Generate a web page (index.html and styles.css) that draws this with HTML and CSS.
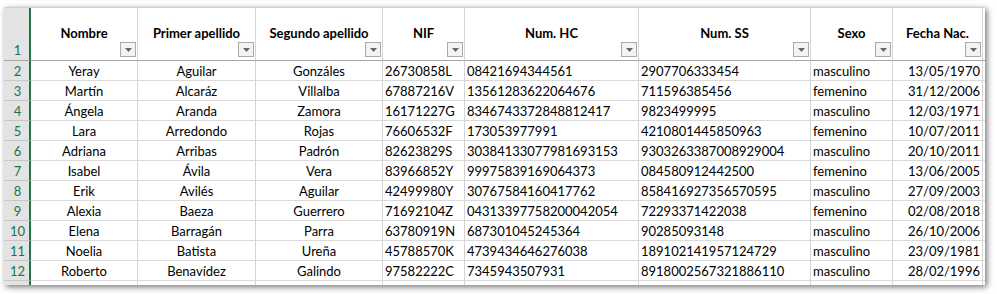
FILE: index.html
```html
<!DOCTYPE html>
<html lang="es">
  <head>
    <meta charset="UTF-8" />
    <title>Pacientes</title>
    <link rel="stylesheet" href="styles.css">
  </head>
  <body>
    <div class="sheet">
      <div class="grid">
        <!-- Header row (frozen) -->
        <div class="rh rh-top">1</div>
        <div class="hd">Nombre<span class="filter"><svg width="7" height="4"><polygon points="0,0 7,0 3.5,4" fill="#666"/></svg></span></div>
        <div class="hd">Primer apellido<span class="filter"><svg width="7" height="4"><polygon points="0,0 7,0 3.5,4" fill="#666"/></svg></span></div>
        <div class="hd">Segundo apellido<span class="filter"><svg width="7" height="4"><polygon points="0,0 7,0 3.5,4" fill="#666"/></svg></span></div>
        <div class="hd">NIF<span class="filter"><svg width="7" height="4"><polygon points="0,0 7,0 3.5,4" fill="#666"/></svg></span></div>
        <div class="hd">Num. HC<span class="filter"><svg width="7" height="4"><polygon points="0,0 7,0 3.5,4" fill="#666"/></svg></span></div>
        <div class="hd">Num. SS<span class="filter"><svg width="7" height="4"><polygon points="0,0 7,0 3.5,4" fill="#666"/></svg></span></div>
        <div class="hd">Sexo<span class="filter"><svg width="7" height="4"><polygon points="0,0 7,0 3.5,4" fill="#666"/></svg></span></div>
        <div class="hd">Fecha Nac.<span class="filter"><svg width="7" height="4"><polygon points="0,0 7,0 3.5,4" fill="#666"/></svg></span></div>
        <div class="hd x"></div>

        <div class="rh">2</div>
        <div class="c">Yeray</div><div class="c">Aguilar</div><div class="c">Gonzáles</div>
        <div>26730858L</div><div>08421694344561</div><div>2907706333454</div>
        <div>masculino</div><div class="r">13/05/1970</div><div class="x"></div>

        <div class="rh">3</div>
        <div class="c">Martín</div><div class="c">Alcaráz</div><div class="c">Villalba</div>
        <div>67887216V</div><div>13561283622064676</div><div>711596385456</div>
        <div>femenino</div><div class="r">31/12/2006</div><div class="x"></div>

        <div class="rh">4</div>
        <div class="c">Ángela</div><div class="c">Aranda</div><div class="c">Zamora</div>
        <div>16171227G</div><div>8346743372848812417</div><div>9823499995</div>
        <div>masculino</div><div class="r">12/03/1971</div><div class="x"></div>

        <div class="rh">5</div>
        <div class="c">Lara</div><div class="c">Arredondo</div><div class="c">Rojas</div>
        <div>76606532F</div><div>173053977991</div><div>4210801445850963</div>
        <div>femenino</div><div class="r">10/07/2011</div><div class="x"></div>

        <div class="rh">6</div>
        <div class="c">Adriana</div><div class="c">Arribas</div><div class="c">Padrón</div>
        <div>82623829S</div><div>30384133077981693153</div><div>9303263387008929004</div>
        <div>masculino</div><div class="r">20/10/2011</div><div class="x"></div>

        <div class="rh">7</div>
        <div class="c">Isabel</div><div class="c">Ávila</div><div class="c">Vera</div>
        <div>83966852Y</div><div>99975839169064373</div><div>084580912442500</div>
        <div>femenino</div><div class="r">13/06/2005</div><div class="x"></div>

        <div class="rh">8</div>
        <div class="c">Erik</div><div class="c">Avilés</div><div class="c">Aguilar</div>
        <div>42499980Y</div><div>30767584160417762</div><div>858416927356570595</div>
        <div>masculino</div><div class="r">27/09/2003</div><div class="x"></div>

        <div class="rh">9</div>
        <div class="c">Alexia</div><div class="c">Baeza</div><div class="c">Guerrero</div>
        <div>71692104Z</div><div>04313397758200042054</div><div>72293371422038</div>
        <div>femenino</div><div class="r">02/08/2018</div><div class="x"></div>

        <div class="rh">10</div>
        <div class="c">Elena</div><div class="c">Barragán</div><div class="c">Parra</div>
        <div>63780919N</div><div>687301045245364</div><div>90285093148</div>
        <div>masculino</div><div class="r">26/10/2006</div><div class="x"></div>

        <div class="rh">11</div>
        <div class="c">Noelia</div><div class="c">Batista</div><div class="c">Ureña</div>
        <div>45788570K</div><div>4739434646276038</div><div>189102141957124729</div>
        <div>masculino</div><div class="r">23/09/1981</div><div class="x"></div>

        <div class="rh">12</div>
        <div class="c">Roberto</div><div class="c">Benavídez</div><div class="c">Galindo</div>
        <div>97582222C</div><div>7345943507931</div><div>8918002567321886110</div>
        <div>masculino</div><div class="r">28/02/1996</div><div class="x"></div>

        <!-- partly visible row 13 -->
        <div class="rh"></div>
        <div></div><div></div><div></div><div></div><div></div>
        <div></div><div></div><div></div><div class="x"></div>
      </div>
    </div>
  </body>
</html>
```

FILE: styles.css
```css
* {
  margin: 0;
  padding: 0;
  box-sizing: border-box;
}

body {
  font-family: Lato, "Open Sans", sans-serif;
  font-size: 13px;
  color: #000;
  background-color: #fff;
  padding: 7px 0 0 4px;
  height: 294px;
  overflow: hidden;
}

/* --- Sheet with drop shadow --- */
.sheet {
  width: 981px;
  height: 278px;
  overflow: hidden;
  background-color: #fff;
  border-top: 1px solid #d0d0d0;
  box-shadow: 2px 2px 6px rgba(0, 0, 0, 0.55);
}

.grid {
  display: grid;
  grid-template-columns: 27px 107px 118px 127px 82px 174px 172px 82px 90px 1fr;
  grid-template-rows: 53px repeat(12, 20px);
}

/* --- Cells --- */
.grid > div {
  position: relative;
  border-right: 1px solid #d4d4d4;
  border-bottom: 1px solid #dadada;
  padding: 2px 2px 0;
  line-height: 17px;
  white-space: nowrap;
  overflow: hidden;
}
.grid > .c {
  text-align: center;
}
.grid > .r {
  text-align: right;
}
.grid > .x {
  border-right: none;
}

/* --- Row numbers --- */
.grid > .rh {
  background-color: #e3e3e3;
  border-right: 2px solid #217346;
  border-bottom-color: #c8c8c8;
  color: #217346;
  text-align: center;
  padding-left: 4px;
}
.grid > .rh-top {
  display: flex;
  align-items: flex-end;
  justify-content: center;
  padding-bottom: 1px;
}

/* --- Header row (frozen pane line underneath) --- */
.grid > .hd {
  font-weight: bold;
  text-align: center;
  padding-top: 17px;
}
.grid > .hd,
.grid > .rh-top {
  border-bottom: 1px solid #a6a6a6;
}

.filter {
  position: absolute;
  right: 1px;
  bottom: 3px;
  width: 16px;
  height: 15px;
  border: 1px solid #ababab;
  background-color: #f3f3f3;
  display: flex;
  align-items: center;
  justify-content: center;
}
.filter svg {
  display: block;
}
```
